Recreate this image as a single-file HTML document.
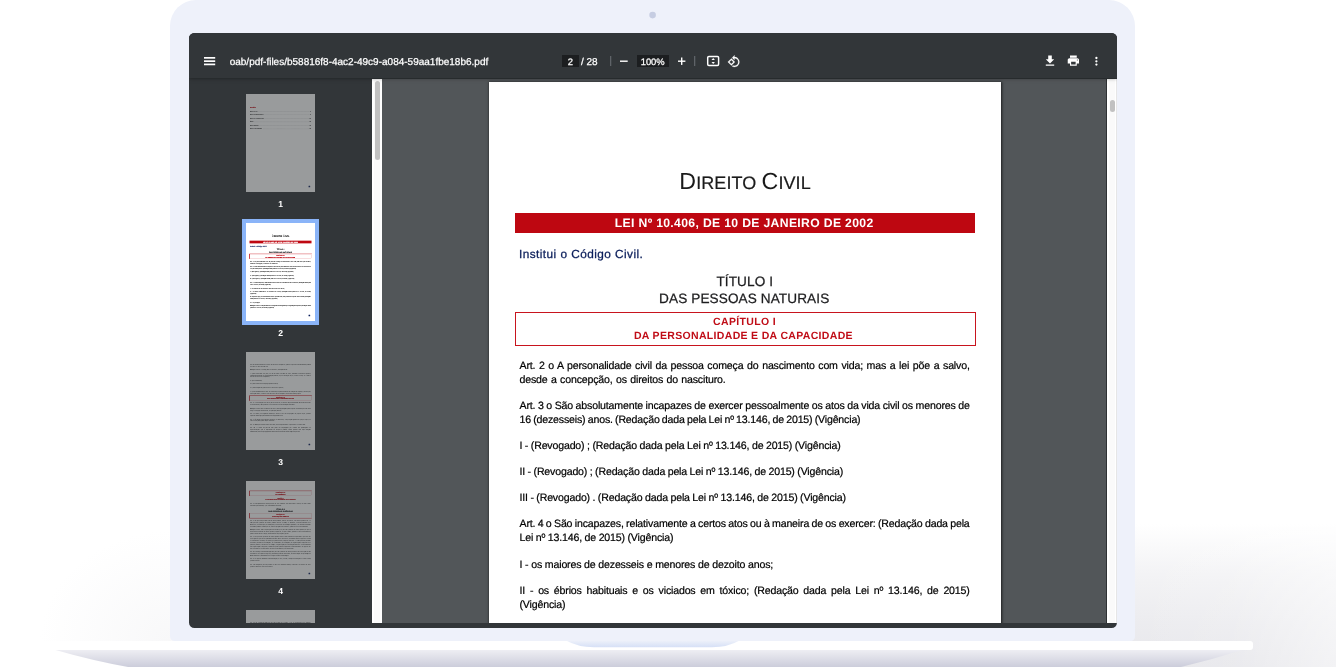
<!DOCTYPE html>
<html lang="pt-BR">
<head>
<meta charset="utf-8">
<title>Direito Civil</title>
<style>
*{box-sizing:border-box;margin:0;padding:0}
html,body{width:1336px;height:667px;overflow:hidden;background:#fff}
body{position:relative;text-rendering:geometricPrecision;font-family:"Liberation Sans",sans-serif}
#frame{position:absolute;left:0;top:0;width:1336px;height:667px}
#screen{will-change:transform;position:absolute;left:189px;top:33px;width:928px;height:595px;background:#323639;border-radius:5.5px;overflow:hidden}
#toolbar{position:absolute;left:0;top:0;width:928px;height:45.3px;background:#323639;z-index:5;box-shadow:0 0 4px rgba(0,0,0,.5)}
#toolbar .t{position:absolute;color:#fff;-webkit-text-stroke:.25px #fff;font-size:10px;line-height:12px;white-space:nowrap}
#toolbar svg{position:absolute;overflow:visible}
.box{position:absolute;background:#1c1e20;color:#fff;font-size:9.4px;line-height:10px;-webkit-text-stroke:.25px #fff;text-align:center}
.sep{position:absolute;width:1px;height:10px;top:23px;background:#5f6368}
#side{position:absolute;left:0;top:46px;width:184px;height:544px;background:#323639;overflow:hidden}
#sbar{position:absolute;left:183.4px;top:46px;width:10.8px;height:544px;background:linear-gradient(to right,#fff 0,#fff 2.4px,#fafafa 2.4px,#fafafa 7.8px,#fff 7.8px,#fff 9.9px,#2e3134 9.9px)}
#sbar i{position:absolute;left:3.1px;top:1.8px;width:4.5px;height:79.5px;border-radius:3px;background:#c1c1c1}
#main{position:absolute;left:193px;top:46px;width:724px;height:544px;background:#525659;overflow:hidden}
#mbar{position:absolute;left:917px;top:46px;width:11px;height:544px;background:linear-gradient(to right,#2e3134 0,#2e3134 1px,#fff 1px,#fff 2.7px,#fafafa 2.7px,#fafafa 9px,#fff 9px,#fff 10.3px,#e6e6e6 10.3px)}
#mbar i{position:absolute;left:4.3px;top:21px;width:4.6px;height:12px;border-radius:3px;background:#c1c1c1}
#page{position:absolute;left:107px;top:3px;width:511.5px;height:727px;background:#fff;box-shadow:0 0 2.5px .5px rgba(0,0,0,.65)}
.th{position:absolute;left:57.2px;width:69px;height:98px;background:#fff;overflow:hidden;opacity:.5}
.th.sel{opacity:1}
.th.sel{background:#fff;box-shadow:0 0 0 4px #8ab4f8}
.tn{position:absolute;left:57.2px;width:69px;text-align:center;color:#fff;font-size:8.6px;font-weight:700;line-height:10px}
.l{position:absolute;white-space:nowrap;color:#111;letter-spacing:-.17px}
.b{font-size:10.6px;line-height:14px;color:#000;-webkit-text-stroke:.2px #000}
.ttl{color:#1a1a1a;letter-spacing:.1px;-webkit-text-stroke:.2px #1a1a1a}
.ttl span{font-size:23.2px;line-height:0;-webkit-text-stroke:0}
.bar{position:absolute;background:#be0711}
.rbox{position:absolute;border:1px solid #c8141e}
.mini{position:absolute;left:0;top:0;width:512px;height:727px;transform:scale(.1348);transform-origin:0 0;background:#fff}
.mini .l,.mini .toc{-webkit-text-stroke:.35px}
.mini .flow{-webkit-text-stroke:.1px}
.mini .l:not(.b),.mini .fk,.mini .fb,.mini .fr{-webkit-text-stroke-width:1.1px!important}
.mini .rbox,.mini .fb{box-shadow:0 0 0 2px #c8141e}
.mk{position:absolute;width:12px;height:12px;background:#0b1e5b;border-radius:2px}
.toc{position:absolute;left:30px;width:452px;display:flex;align-items:baseline;font-size:10.6px;line-height:14px;color:#111}
.toc i{flex:1;border-bottom:1px dotted #333;margin:0 3px}
.flow{position:absolute;left:30.7px;width:450.3px;font-size:10.6px;line-height:13.95px;letter-spacing:-.17px;color:#111;text-align:justify}
.flow p{margin:0 0 12.2px}
.fb,.fr,.fk{text-align:center;font-weight:700;color:#c00d17;font-size:10.5px;line-height:13.5px;letter-spacing:.33px;margin:0 0 12px}
.fb{border:1px solid #c8141e;padding:3px 0;margin:0 -5px 12px}
.fk{color:#1d1d1f;font-weight:700;font-size:13.6px;line-height:16.8px;margin-bottom:6px}
</style>
</head>
<body>
<svg id="frame" viewBox="0 0 1336 667">
<defs>
<linearGradient id="gb" x1="0" y1="0" x2="0" y2="1"><stop offset="0" stop-color="#eeeef3"/><stop offset="1" stop-color="#cccddb"/></linearGradient>
<linearGradient id="gn" x1="0" y1="0" x2="0" y2="1"><stop offset="0" stop-color="#eef1fa"/><stop offset="1" stop-color="#d6e0f6"/></linearGradient>
<linearGradient id="sv" x1="0" y1="0" x2="0" y2="1"><stop offset="0" stop-color="#e7e7eb" stop-opacity="0"/><stop offset=".35" stop-color="#e7e7eb" stop-opacity=".5"/><stop offset=".7" stop-color="#e7e7eb" stop-opacity=".8"/><stop offset="1" stop-color="#e7e7eb" stop-opacity="1"/></linearGradient>
<linearGradient id="sh" x1="0" y1="0" x2="1" y2="0"><stop offset="0" stop-color="#fff" stop-opacity="0"/><stop offset=".5" stop-color="#fff" stop-opacity=".12"/><stop offset="1" stop-color="#fff" stop-opacity=".5"/></linearGradient>
<radialGradient id="sl" cx="170" cy="641" r="1" gradientTransform="translate(170 641) scale(130 110) translate(-170 -641)" gradientUnits="userSpaceOnUse"><stop offset="0" stop-color="#f8f8f9"/><stop offset="1" stop-color="#fff"/></radialGradient>
</defs>
<rect x="1130" y="524" width="206" height="143" fill="url(#sv)"/><rect x="1130" y="524" width="206" height="143" fill="url(#sh)"/><rect x="30" y="520" width="145" height="121" fill="url(#sl)"/>
<path d="M170 636V26A26 26 0 0 1 196 0H1109A26 26 0 0 1 1135 26V636Q1135 641 1130 641H175Q170 641 170 636Z" fill="#eef1fa"/>
<path d="M55.5 650H1242Q1211 660 1181 667H128Q92 660.5 55.5 650Z" fill="url(#gb)"/>
<path d="M40 641H1250Q1253 641 1253 644V647Q1253 650 1250 650H40Z" fill="#fff"/>
<path d="M566 640.5H739.5Q728 647.2 712 647.2H594Q578 647.2 566 640.5Z" fill="url(#gn)"/>
<circle cx="652.6" cy="15.1" r="3.3" fill="#c6cde2"/>
</svg>
<div id="screen">
 <div id="toolbar">
  <svg width="928" height="46" viewBox="0 0 928 46" style="left:0;top:0" fill="#fff">
   <rect x="15" y="24" width="11.2" height="1.7"/><rect x="15" y="27.3" width="11.2" height="1.7"/><rect x="15" y="30.55" width="11.2" height="1.7"/>
   <rect x="421" y="23" width="1.3" height="10" fill="#5f6368"/>
   <rect x="431" y="27.5" width="7.7" height="1.4"/>
   <rect x="489" y="27.5" width="7.4" height="1.4"/><rect x="492" y="24.5" width="1.4" height="7.4"/>
   <rect x="505" y="23" width="1.3" height="10" fill="#5f6368"/>
   <rect x="518.7" y="23.4" width="10.9" height="9.1" rx="1.2" fill="none" stroke="#fff" stroke-width="1.45"/>
   <path d="M524.2 25.1l1.7 1.8h-3.4zM522.5 29.1h3.4l-1.7 1.8z"/>
   <g transform="translate(538.33 21.88) scale(.549)" stroke="#fff" stroke-width=".45"><path d="M7.34 6.41L.86 12.9l6.49 6.48 6.49-6.48-6.5-6.49zM3.69 12.9l3.66-3.66L11 12.9l-3.66 3.66-3.65-3.66zm15.67-6.26C17.61 4.88 15.3 4 13 4V.76L8.76 5 13 9.24V6c1.79 0 3.58.68 4.95 2.05 2.73 2.73 2.73 7.17 0 9.9C16.58 19.32 14.79 20 13 20c-.97 0-1.94-.21-2.84-.61l-1.49 1.49C10.02 21.62 11.51 22 13 22c2.3 0 4.61-.88 6.36-2.64 3.52-3.51 3.52-9.21 0-12.72z"/></g>
   <g transform="translate(853.8 20.8) scale(.6)"><path d="M19 9h-4V3H9v6H5l7 7 7-7zM5 18v2h14v-2H5z"/></g>
   <g transform="translate(877.6 20.8) scale(.565)"><path d="M19 8H5c-1.66 0-3 1.34-3 3v6h4v4h12v-4h4v-6c0-1.66-1.34-3-3-3zm-3 11H8v-5h8v5zm3-7c-.55 0-1-.45-1-1s.45-1 1-1 1 .45 1 1-.45 1-1 1zm-1-9H6v4h12V3z"/></g>
   <circle cx="907.4" cy="25" r="1.15"/><circle cx="907.4" cy="28.35" r="1.15"/><circle cx="907.4" cy="31.6" r="1.15"/>
  </svg>
  <div class="t" style="left:40.7px;top:24px">oab/pdf-files/b58816f8-4ac2-49c9-a084-59aa1fbe18b6.pdf</div>
  <div class="box" style="left:373px;top:22px;width:16.5px;height:12.4px;padding-top:2px">2</div>
  <div class="t" style="left:392px;top:24px">/ 28</div>
  <div class="box" style="left:447.6px;top:22px;width:32.2px;height:12.4px;padding-top:2px">100%</div>
 </div>
 <div id="side">
<div class="th" style="top:15.4px"><div class="mini">
<div class="l" style="left:30px;top:97px;font-size:11px;line-height:14px;font-weight:700;color:#c00d17">Sumário</div>
<div class="toc" style="top:120.0px"><span>Direito Civil</span><i></i><span>2</span></div>
<div class="toc" style="top:146.0px"><span>Direito Administrativo</span><i></i><span>8</span></div>
<div class="toc" style="top:172.0px"><span>Direito Constitucional</span><i></i><span>13</span></div>
<div class="toc" style="top:198.0px"><span>Ética</span><i></i><span>19</span></div>
<div class="toc" style="top:224.0px"><span>Direito Penal</span><i></i><span>23</span></div>
<div class="toc" style="top:250.0px"><span>Direito do Trabalho</span><i></i><span>26</span></div>
<div class="mk" style="left:464px;top:680px"></div>
</div></div>
<div class="tn" style="top:120px">1</div>
<div class="th sel" style="top:144.4px"><div class="mini">
<div class="l ttl" style="left:190.30px;top:88px;font-size:18px;line-height:26px"><span>D</span>IREITO <span>C</span>IVIL</div>
  <div class="bar" style="left:26px;top:130.7px;width:460px;height:20.4px"></div>
  <div class="l" style="left:125.80px;top:133px;font-size:12.2px;line-height:16px;font-weight:700;color:#fff;letter-spacing:.337px">LEI Nº 10.406, DE 10 DE JANEIRO DE 2002</div>
  <div class="l" style="left:29.90px;top:164px;font-size:11.8px;line-height:16px;color:#0b1e5b;letter-spacing:.46px;-webkit-text-stroke:.28px #0b1e5b">Institui o Código Civil.</div>
  <div class="l" style="left:227.40px;top:191px;font-size:13.6px;line-height:18px;color:#1d1d1f;letter-spacing:.1px;-webkit-text-stroke:.25px #1d1d1f">TÍTULO I</div>
  <div class="l" style="left:170.10px;top:208px;font-size:13.6px;line-height:18px;color:#1d1d1f;letter-spacing:.1px;-webkit-text-stroke:.25px #1d1d1f">DAS PESSOAS NATURAIS</div>
  <div class="rbox" style="left:25.5px;top:229.8px;width:461px;height:34.2px"></div>
  <div class="l" style="left:224.10px;top:233px;font-size:10.5px;line-height:14px;font-weight:700;color:#c00d17;letter-spacing:.33px">CAPÍTULO I</div>
  <div class="l" style="left:144.90px;top:247px;font-size:10.5px;line-height:14px;font-weight:700;color:#c00d17;letter-spacing:.33px">DA PERSONALIDADE E DA CAPACIDADE</div>
  <div class="l b" style="left:30.5px;top:277px;word-spacing:0.87px">Art. 2 o A personalidade civil da pessoa começa do nascimento com vida; mas a lei põe a salvo,</div>
  <div class="l b" style="left:30.5px;top:291px;word-spacing:0.64px">desde a concepção, os direitos do nascituro.</div>
  <div class="l b" style="left:30.5px;top:317px;word-spacing:-0.14px">Art. 3 o São absolutamente incapazes de exercer pessoalmente os atos da vida civil os menores de</div>
  <div class="l b" style="left:30.5px;top:331px;word-spacing:-0.53px">16 (dezesseis) anos. (Redação dada pela Lei nº 13.146, de 2015) (Vigência)</div>
  <div class="l b" style="left:30.5px;top:357px;word-spacing:-0.19px">I - (Revogado) ; (Redação dada pela Lei nº 13.146, de 2015) (Vigência)</div>
  <div class="l b" style="left:30.5px;top:383px;word-spacing:-0.21px">II - (Revogado) ; (Redação dada pela Lei nº 13.146, de 2015) (Vigência)</div>
  <div class="l b" style="left:30.5px;top:409px;word-spacing:-0.21px">III - (Revogado) . (Redação dada pela Lei nº 13.146, de 2015) (Vigência)</div>
  <div class="l b" style="left:30.5px;top:435px;word-spacing:-0.36px">Art. 4 o São incapazes, relativamente a certos atos ou à maneira de os exercer: (Redação dada pela</div>
  <div class="l b" style="left:30.5px;top:449px;word-spacing:-0.15px">Lei nº 13.146, de 2015) (Vigência)</div>
  <div class="l b" style="left:30.5px;top:476px;word-spacing:0.01px">I - os maiores de dezesseis e menores de dezoito anos;</div>
  <div class="l b" style="left:30.5px;top:502px;word-spacing:2.09px">II - os ébrios habituais e os viciados em tóxico; (Redação dada pela Lei nº 13.146, de 2015)</div>
  <div class="l b" style="left:30.5px;top:516px">(Vigência)</div>
  <div class="l b" style="left:30.5px;top:542px;word-spacing:-0.48px">III - aqueles que, por causa transitória ou permanente, não puderem exprimir sua vontade; (Redação</div>
  <div class="l b" style="left:30.5px;top:556px">dada pela Lei nº 13.146, de 2015) (Vigência)</div>
  <div class="l b" style="left:30.5px;top:582px">IV - os pródigos.</div>
  <div class="l b" style="left:30.5px;top:608px;word-spacing:-0.20px">Parágrafo único. A capacidade dos indígenas será regulada por legislação especial. (Redação dada</div>
  <div class="l b" style="left:30.5px;top:622px">pela Lei nº 13.146, de 2015) (Vigência)</div>
  <div class="mk" style="left:464px;top:680px"></div>
</div></div>
<div class="tn" style="top:249px">2</div>
<div class="th" style="top:273.1px"><div class="mini">
<div class="flow" style="top:86px">
<p>Art. 5 o A menoridade cessa aos dezoito anos completos, quando a pessoa fica habilitada à prática de todos os atos da vida civil.</p>
<p>Parágrafo único. Cessará, para os menores, a incapacidade:</p>
<p>I - pela concessão dos pais, ou de um deles na falta do outro, mediante instrumento público, independentemente de homologação judicial, ou por sentença do juiz, ouvido o tutor, se o menor tiver dezesseis anos completos;</p>
<p>II - pelo casamento;</p>
<p>III - pelo exercício de emprego público efetivo;</p>
<p>IV - pela colação de grau em curso de ensino superior;</p>
<p>V - pelo estabelecimento civil ou comercial, ou pela existência de relação de emprego, desde que, em função deles, o menor com dezesseis anos completos tenha economia própria.</p>
<div class="fb">CAPÍTULO II<br>DOS DIREITOS DA PERSONALIDADE</div>
<p>Art. 11. Com exceção dos casos previstos em lei, os direitos da personalidade são intransmissíveis e irrenunciáveis, não podendo o seu exercício sofrer limitação voluntária.</p>
<p>Parágrafo único. Em se tratando de morto, terá legitimação para requerer a medida prevista neste artigo o cônjuge sobrevivente, ou qualquer parente.</p>
<p>Art. 13. Salvo por exigência médica, é defeso o ato de disposição do próprio corpo, quando importar diminuição permanente da integridade física.</p>
<p>Art. 14. É válida, com objetivo científico, ou altruístico, a disposição gratuita do próprio corpo, no todo ou em parte, para depois da morte.</p>
<p>Art. 16. Toda pessoa tem direito ao nome, nele compreendidos o prenome e o sobrenome.</p>
<p>Art. 17. O nome da pessoa não pode ser empregado por outrem em publicações ou representações que a exponham ao desprezo público, ainda quando não haja intenção difamatória, nem em propaganda comercial sem a devida autorização da pessoa.</p>
</div><div class="mk" style="left:464px;top:680px"></div>
</div></div>
<div class="tn" style="top:378px">3</div>
<div class="th" style="top:401.8px"><div class="mini">
<div class="flow" style="top:74px">
<div class="fb">CAPÍTULO III<br>DA AUSÊNCIA</div>
<div class="fr">SEÇÃO I<br>DA CURADORIA DOS BENS DO AUSENTE</div>
<p>Art. 22. Desaparecendo uma pessoa do seu domicílio sem dela haver notícia, se não houver deixado representante, o juiz declarará a ausência.</p>
<div class="fk">TÍTULO II<br>DAS PESSOAS JURÍDICAS</div>
<div class="fb">CAPÍTULO I<br>DISPOSIÇÕES GERAIS</div>
<p>Art. 40. As pessoas jurídicas são de direito público, interno ou externo, e de direito privado. Art. 41. São pessoas jurídicas de direito público interno a União, os Estados, o Distrito Federal e os Territórios, os Municípios, as autarquias, inclusive as associações públicas, e as demais entidades de caráter público criadas por lei, salvo disposição em contrário, quanto ao seu funcionamento.</p>
<p>Parágrafo único. Salvo disposição em contrário, as pessoas jurídicas de direito público, a que se tenha dado estrutura de direito privado, regem-se, no que couber, quanto ao seu funcionamento, pelas normas deste Código, observadas as disposições gerais.</p>
<p>Art. 43. As pessoas jurídicas de direito público interno são civilmente responsáveis por atos dos seus agentes que nessa qualidade causem danos a terceiros, ressalvado direito regressivo contra os causadores do dano, se houver, por parte destes, culpa ou dolo. Art. 44. São pessoas jurídicas de direito privado as associações, as sociedades, as fundações, as organizações religiosas e os partidos políticos, sendo livres a criação, a organização, a estruturação interna e o funcionamento das organizações religiosas, vedado ao poder público negar-lhes reconhecimento ou registro dos atos constitutivos e necessários ao seu funcionamento, na forma da lei.</p>
<p>Art. 45. Começa a existência legal das pessoas jurídicas de direito privado com a inscrição do ato constitutivo no respectivo registro, precedida, quando necessário, de autorização ou aprovação do Poder Executivo, averbando-se no registro todas as alterações.</p>
<p>Art. 46. O registro declarará a denominação, os fins, a sede, o tempo de duração e o fundo social, quando houver.</p>
<p>Art. 47. Obrigam a pessoa jurídica os atos dos administradores, exercidos nos limites de seus poderes definidos no ato constitutivo.</p>
</div><div class="mk" style="left:464px;top:680px"></div>
</div></div>
<div class="tn" style="top:507px">4</div>
<div class="th" style="top:530.6px"><div class="mini"><div class="flow" style="top:86px"><p>Art. 49. Se a administração da pessoa jurídica vier a faltar, o juiz, a requerimento de qualquer interessado, nomear-lhe-á administrador provisório.</p></div></div></div>
</div><!--/side-->
 <div id="sbar"><i></i></div>
 <div id="main"><div id="page">
  <div class="l ttl" style="left:190.30px;top:88px;font-size:18px;line-height:26px"><span>D</span>IREITO <span>C</span>IVIL</div>
  <div class="bar" style="left:26px;top:130.7px;width:460px;height:20.4px"></div>
  <div class="l" style="left:125.80px;top:133px;font-size:12.2px;line-height:16px;font-weight:700;color:#fff;letter-spacing:.337px">LEI Nº 10.406, DE 10 DE JANEIRO DE 2002</div>
  <div class="l" style="left:29.90px;top:164px;font-size:11.8px;line-height:16px;color:#0b1e5b;letter-spacing:.46px;-webkit-text-stroke:.28px #0b1e5b">Institui o Código Civil.</div>
  <div class="l" style="left:227.40px;top:191px;font-size:13.6px;line-height:18px;color:#1d1d1f;letter-spacing:.1px;-webkit-text-stroke:.25px #1d1d1f">TÍTULO I</div>
  <div class="l" style="left:170.10px;top:208px;font-size:13.6px;line-height:18px;color:#1d1d1f;letter-spacing:.1px;-webkit-text-stroke:.25px #1d1d1f">DAS PESSOAS NATURAIS</div>
  <div class="rbox" style="left:25.5px;top:229.8px;width:461px;height:34.2px"></div>
  <div class="l" style="left:224.10px;top:233px;font-size:10.5px;line-height:14px;font-weight:700;color:#c00d17;letter-spacing:.33px">CAPÍTULO I</div>
  <div class="l" style="left:144.90px;top:247px;font-size:10.5px;line-height:14px;font-weight:700;color:#c00d17;letter-spacing:.33px">DA PERSONALIDADE E DA CAPACIDADE</div>
  <div class="l b" style="left:30.5px;top:277px;word-spacing:0.87px">Art. 2 o A personalidade civil da pessoa começa do nascimento com vida; mas a lei põe a salvo,</div>
  <div class="l b" style="left:30.5px;top:291px;word-spacing:0.64px">desde a concepção, os direitos do nascituro.</div>
  <div class="l b" style="left:30.5px;top:317px;word-spacing:-0.14px">Art. 3 o São absolutamente incapazes de exercer pessoalmente os atos da vida civil os menores de</div>
  <div class="l b" style="left:30.5px;top:331px;word-spacing:-0.53px">16 (dezesseis) anos. (Redação dada pela Lei nº 13.146, de 2015) (Vigência)</div>
  <div class="l b" style="left:30.5px;top:357px;word-spacing:-0.19px">I - (Revogado) ; (Redação dada pela Lei nº 13.146, de 2015) (Vigência)</div>
  <div class="l b" style="left:30.5px;top:383px;word-spacing:-0.21px">II - (Revogado) ; (Redação dada pela Lei nº 13.146, de 2015) (Vigência)</div>
  <div class="l b" style="left:30.5px;top:409px;word-spacing:-0.21px">III - (Revogado) . (Redação dada pela Lei nº 13.146, de 2015) (Vigência)</div>
  <div class="l b" style="left:30.5px;top:435px;word-spacing:-0.36px">Art. 4 o São incapazes, relativamente a certos atos ou à maneira de os exercer: (Redação dada pela</div>
  <div class="l b" style="left:30.5px;top:449px;word-spacing:-0.15px">Lei nº 13.146, de 2015) (Vigência)</div>
  <div class="l b" style="left:30.5px;top:476px;word-spacing:0.01px">I - os maiores de dezesseis e menores de dezoito anos;</div>
  <div class="l b" style="left:30.5px;top:502px;word-spacing:2.09px">II - os ébrios habituais e os viciados em tóxico; (Redação dada pela Lei nº 13.146, de 2015)</div>
  <div class="l b" style="left:30.5px;top:516px">(Vigência)</div>
  <div class="l b" style="left:30.5px;top:542px;word-spacing:-0.48px">III - aqueles que, por causa transitória ou permanente, não puderem exprimir sua vontade; (Redação</div>
  <div class="l b" style="left:30.5px;top:556px">dada pela Lei nº 13.146, de 2015) (Vigência)</div>
  <div class="l b" style="left:30.5px;top:582px">IV - os pródigos.</div>
  <div class="l b" style="left:30.5px;top:608px;word-spacing:-0.20px">Parágrafo único. A capacidade dos indígenas será regulada por legislação especial. (Redação dada</div>
  <div class="l b" style="left:30.5px;top:622px">pela Lei nº 13.146, de 2015) (Vigência)</div>
  <div class="mk" style="left:464px;top:680px"></div>
 </div></div>
 <div id="mbar"><i></i></div>
</div>
</body>
</html>
